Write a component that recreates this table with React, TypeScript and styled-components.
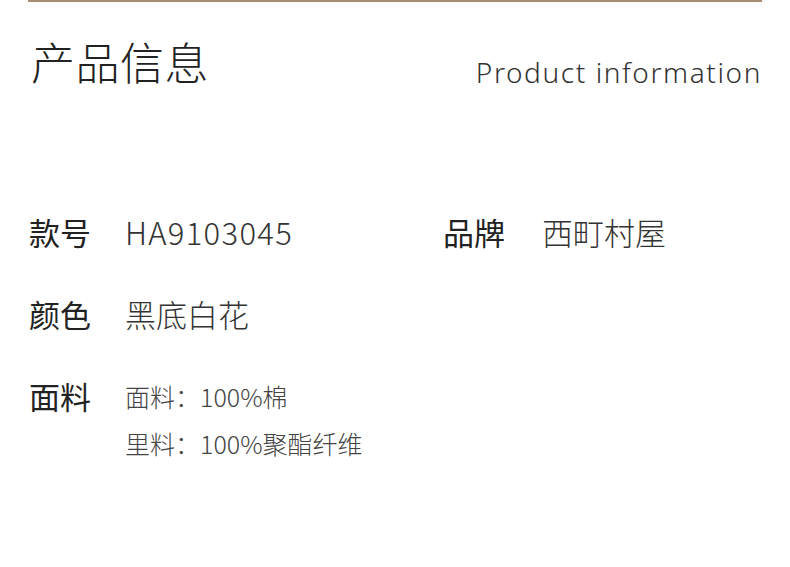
import React from "react";
import styled, { createGlobalStyle } from "styled-components";

const GlobalStyle = createGlobalStyle`
  body {
    margin: 0;
    background: #fff;
    font-family: "Noto Sans CJK SC", "Noto Sans", sans-serif;
  }
`;

const Page = styled.div`
  width: 790px;
  height: 567px;
  padding: 0 28px;
  box-sizing: border-box;
  background: #fff;
`;

const TopLine = styled.div`
  height: 2px;
  background: #a88c74;
`;

const Header = styled.div`
  display: flex;
  justify-content: space-between;
  align-items: flex-end;
  padding: 33px 0 0 3px;
`;

const Title = styled.h1`
  margin: 0;
  font-size: 44px;
  line-height: 52px;
  font-weight: 300;
  color: #222;
  letter-spacing: 0.5px;
`;

const SubTitle = styled.div`
  font-family: "Noto Sans", sans-serif;
  font-size: 28px;
  line-height: 34px;
  font-weight: 300;
  color: #333;
  letter-spacing: 1.6px;
  margin-bottom: -2px;
`;

const Info = styled.div`
  margin-top: 127px;
  display: flex;
  flex-direction: column;
  gap: 46px;
  padding-left: 1px;
`;

const Row = styled.div`
  display: flex;
  align-items: flex-start;
`;

const Pair = styled.div<{ $width?: number }>`
  display: flex;
  align-items: flex-start;
  width: ${(p) => (p.$width ? `${p.$width}px` : "auto")};
`;

const Label = styled.div<{ $width: number }>`
  width: ${(p) => p.$width}px;
  flex-shrink: 0;
  font-size: 31px;
  line-height: 36px;
  color: #222;
  font-weight: 400;
`;

const Value = styled.div<{ $spacing?: number }>`
  font-size: 31px;
  line-height: 36px;
  font-weight: 300;
  color: #333;
  letter-spacing: ${(p) => p.$spacing ?? 0}px;
`;

const SubList = styled.div`
  display: flex;
  flex-direction: column;
  gap: 17px;
  padding-top: 3px;
`;

const SubItem = styled.div`
  font-size: 25px;
  line-height: 30px;
  font-weight: 300;
  color: #444;
`;

export default function App() {
  return (
    <Page>
      <GlobalStyle />
      <TopLine />
      <Header>
        <Title>产品信息</Title>
        <SubTitle>Product information</SubTitle>
      </Header>
      <Info>
        <Row>
          <Pair $width={414}>
            <Label $width={96}>款号</Label>
            <Value $spacing={1.3}>HA9103045</Value>
          </Pair>
          <Pair>
            <Label $width={99}>品牌</Label>
            <Value>西町村屋</Value>
          </Pair>
        </Row>
        <Row>
          <Pair>
            <Label $width={96}>颜色</Label>
            <Value>黑底白花</Value>
          </Pair>
        </Row>
        <Row>
          <Pair>
            <Label $width={96}>面料</Label>
            <SubList>
              <SubItem>面料：100%棉</SubItem>
              <SubItem>里料：100%聚酯纤维</SubItem>
            </SubList>
          </Pair>
        </Row>
      </Info>
    </Page>
  );
}
